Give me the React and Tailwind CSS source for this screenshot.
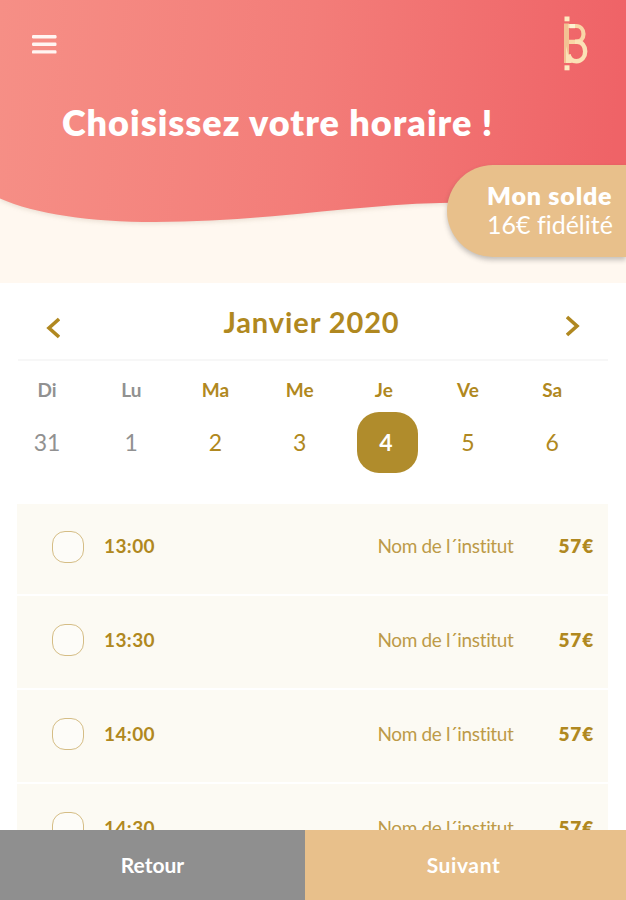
import clsx from "clsx";

const days = [
  { name: "Di", number: 31, disabled: true },
  { name: "Lu", number: 1, disabled: true },
  { name: "Ma", number: 2 },
  { name: "Me", number: 3 },
  { name: "Je", number: 4, selected: true },
  { name: "Ve", number: 5 },
  { name: "Sa", number: 6 },
];

const slots = ["13:00", "13:30", "14:00", "14:30"];

const MenuIcon = () => (
  <svg width="26" height="20" viewBox="0 0 26 20" fill="#fff5f2">
    <rect x="1" y="0" width="24.5" height="3.4" rx="1.2" />
    <rect x="1" y="7.6" width="24.5" height="3.4" rx="1.2" />
    <rect x="1" y="15.2" width="24.5" height="3.4" rx="1.2" />
  </svg>
);

const Logo = () => (
  <svg width="26" height="56" viewBox="0 0 26 56" fill="none">
    <path d="M3.500 7.500v39.500" stroke="#f3c193" strokeWidth="5" />
    <path
      d="M5 10h8c4.500 0 7.500 3.500 7.500 8s-3 7.800-7.500 7.800H6"
      stroke="#f9d6a6"
      strokeWidth="4.200"
    />
    <path
      d="M12 25.800h2c5 0 8.200 4.200 8.200 9.600s-3.600 9.800-8.700 9.800c-4 0-7-2-8-6.700"
      stroke="#fbe2b6"
      strokeWidth="4.400"
    />
    <path d="M3 30v17H9L5 38Z" fill="#fbe2b6" />
    <rect x="1.500" y="0.500" width="5" height="4.800" fill="#fdeac0" />
    <rect x="1.500" y="49.300" width="5" height="5" fill="#fdeac0" />
    <rect x="6.500" y="8" width="5.500" height="4.200" fill="#fdf3d2" />
  </svg>
);

const Chevron = ({ flipped }) => (
  <svg
    width="14"
    height="22"
    viewBox="0 0 14 22"
    fill="none"
    stroke="#b08820"
    strokeWidth="3.6"
    className={clsx(flipped ? "-mt-[2px] -scale-x-100" : "mt-[2px]")}
  >
    <path d="M13 2 3 11l10 9" />
  </svg>
);

const Header = () => (
  <header className="relative h-[283px] shrink-0 bg-[#fff8f0]">
    <svg
      className="absolute inset-0 drop-shadow-[0_2px_2px_rgba(120,90,60,0.14)]"
      width="626"
      height="240"
      viewBox="0 0 626 240"
    >
      <defs>
        <linearGradient id="wave" x1="0" y1="0" x2="1" y2="0.03">
          <stop offset="0" stopColor="#f68f86" />
          <stop offset="0.5" stopColor="#f37d79" />
          <stop offset="1" stopColor="#ef6367" />
        </linearGradient>
      </defs>
      <path
        d="M0 0H626V207C560 203 500 201 440 203C350 205 265 222 155 222C90 222 35 214 0 198.500Z"
        fill="url(#wave)"
      />
    </svg>
    <div className="relative flex items-start justify-between pt-[16px] pr-[37px] pl-[31px]">
      <button className="mt-[19px]">
        <MenuIcon />
      </button>
      <Logo />
    </div>
    <h1 className="relative mt-[27px] ml-[62px] text-[36px] leading-[46px] font-extrabold tracking-[1px] whitespace-nowrap text-white">
      Choisissez votre horaire !
    </h1>
    <div className="absolute top-[165px] right-0 h-[92px] w-[179px] rounded-l-[46px] bg-[#e8c08b] pt-[16px] pl-[40px] whitespace-nowrap text-white shadow-[0_3px_5px_rgba(60,60,60,0.3)]">
      <p className="text-[25px] leading-[29px] font-extrabold tracking-[0.8px]">
        Mon solde
      </p>
      <p className="text-[25px] leading-[29px]">16€ fidélité</p>
    </div>
  </header>
);

const Calendar = () => (
  <section className="shrink-0 px-[18px] text-[#b08820]">
    <div className="flex h-[78px] items-center justify-between border-b-2 border-[#f7f7f7] pt-[11px] pr-[28px] pl-[28px]">
      <button>
        <Chevron />
      </button>
      <h2 className="mr-[3px] mb-[9px] text-[29px] leading-[36px] font-bold tracking-[0.9px] whitespace-nowrap">
        Janvier 2020
      </h2>
      <button>
        <Chevron flipped />
      </button>
    </div>
    <div className="-mx-[13px] grid grid-cols-[repeat(7,84.2px)] pt-[18px]">
      {days.map((day) => (
        <div
          key={day.name}
          className={clsx(
            "flex flex-col items-center",
            day.disabled && "text-[#919191]",
          )}
        >
          <span className="text-[19px] leading-[22px] font-bold">
            {day.name}
          </span>
          <span
            className={clsx(
              "mt-[11px] flex h-[61px] w-[61px] items-center justify-center rounded-[22px] text-[23px]",
              day.selected &&
                "ml-[8px] bg-[#b08c2c] pr-[4px] font-bold text-white",
            )}
          >
            {day.number}
          </span>
        </div>
      ))}
    </div>
  </section>
);

const Slot = ({ time }) => (
  <li className="flex h-[92px] shrink-0 items-center bg-[#fcfaf3] pr-[14px] pb-[4px] pl-[35px] text-[#b08820] first:h-[90px] first:pb-[5px]">
    <span className="h-[32px] w-[32px] rounded-[13px] border border-[#d5bd85] bg-[#fdfcf8]" />
    <span className="ml-[20px] text-[19px] font-bold tracking-[0.4px]">
      {time}
    </span>
    <span className="ml-auto text-[19px] tracking-[-0.35px] text-[#bd9a48]">
      Nom de l´institut
    </span>
    <span className="ml-[45px] text-[19px] font-extrabold tracking-[0.8px]">
      57€
    </span>
  </li>
);

const App = () => {
  return (
    <div className="flex h-[900px] w-[626px] flex-col overflow-hidden bg-white font-['Lato','Liberation_Sans',sans-serif] [font-variant-ligatures:none]">
      <Header />
      <Calendar />
      <ul className="mt-[31px] mr-[18px] ml-[17px] flex min-h-0 flex-1 flex-col gap-[2px] overflow-hidden">
        {slots.map((time) => (
          <Slot key={time} time={time} />
        ))}
      </ul>
      <footer className="flex h-[70px] shrink-0 text-[21px] font-bold text-white">
        <button className="w-[305px] bg-[#8f8f8f] pb-[1px]">Retour</button>
        <button className="flex-1 bg-[#e8c08b] pr-[4px] pb-[1px] tracking-[0.6px]">
          Suivant
        </button>
      </footer>
    </div>
  );
};

export default App;
